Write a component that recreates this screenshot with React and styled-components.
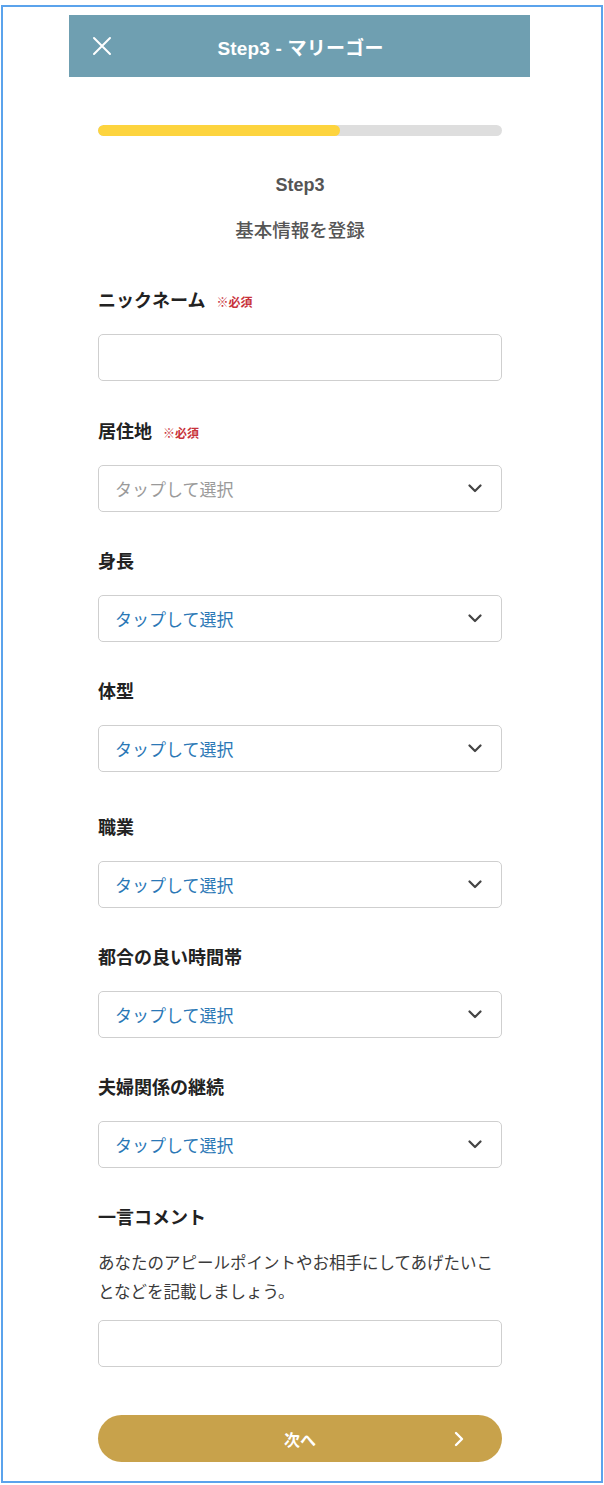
import styled, { createGlobalStyle } from "styled-components";

const GlobalStyle = createGlobalStyle`
  html, body {
    margin: 0;
    padding: 0;
    background: #fff;
  }
  body {
    font-family: "Liberation Sans", "Noto Sans CJK JP", sans-serif;
    color: #222;
  }
  * {
    box-sizing: border-box;
  }
`;

const Frame = styled.div`
  margin: 5px 1px 0 1px;
  height: 1478px;
  border: 2px solid #5ba3ec;
  padding: 8px 0 0 66px;
`;

const Column = styled.div`
  width: 461px;
`;

const Header = styled.header`
  position: relative;
  height: 62px;
  background-color: #6f9fb1;
  display: flex;
  align-items: center;
  justify-content: center;
  color: #fff;

  h1 {
    margin: 0 0 0 2px;
    font-size: 19px;
    font-weight: 600;
    letter-spacing: 0.2px;
  }
`;

const CloseButton = styled.button`
  position: absolute;
  left: 20px;
  top: 50%;
  transform: translateY(-50%);
  width: 26px;
  height: 26px;
  padding: 0;
  border: none;
  background: none;
  display: flex;
  align-items: center;
  justify-content: center;
  cursor: pointer;
`;

const Body = styled.div`
  padding: 48px 28px 0 29px;
`;

const Progress = styled.div`
  height: 11px;
  border-radius: 6px;
  background-color: #dedede;
  overflow: hidden;
`;

const ProgressFill = styled.div`
  height: 100%;
  border-radius: 6px;
  background-color: #fdd43e;
`;

const StepTitle = styled.div`
  margin-top: 37px;
  text-align: center;
  line-height: 24px;
  font-size: 18px;
  font-weight: 700;
  color: #555;
`;

const StepSub = styled.div`
  margin-top: 20px;
  text-align: center;
  line-height: 28px;
  font-size: 18.5px;
  font-weight: 500;
  color: #555;
`;

const Form = styled.div`
  margin-top: 43px;
`;

const Field = styled.div`
  margin-bottom: ${(p) => 37 + (p.$extra || 0)}px;
`;

const Label = styled.div`
  display: flex;
  align-items: baseline;
  gap: 11px;
  height: 26px;
  line-height: 26px;
  font-size: 18px;
  font-weight: 700;
  color: #222;
  margin-bottom: ${(p) => (p.$tight ? 18 : 20)}px;
`;

const Required = styled.span`
  font-size: 12px;
  font-weight: 700;
  color: #c8323a;
`;

const TextBox = styled.div`
  height: 47px;
  border: 1px solid #cfcfcf;
  border-radius: 5px;
  background: #fff;
  margin-top: ${(p) => p.$top || 0}px;
`;

const Select = styled.div`
  height: 47px;
  border: 1px solid #cfcfcf;
  border-radius: 5px;
  background: #fff;
  padding: 0 19px 0 16px;
  display: flex;
  align-items: center;
  justify-content: space-between;
  font-size: 17px;
  color: ${(p) => (p.$muted ? "#9a9a9a" : "#2b78b6")};
`;

const Help = styled.p`
  margin: 0;
  font-size: 16.5px;
  line-height: 29px;
  color: #3a3a3a;
`;

const NextButton = styled.button`
  position: relative;
  margin-top: 48px;
  width: 100%;
  height: 47px;
  border: none;
  border-radius: 24px;
  background-color: #c8a24b;
  color: #fff;
  font-family: inherit;
  font-size: 16px;
  font-weight: 600;
  display: flex;
  align-items: center;
  justify-content: center;
  cursor: pointer;

  svg {
    position: absolute;
    right: 38px;
    top: 50%;
    transform: translateY(-50%);
  }
`;

const Chevron = () => (
  <svg width="14" height="9" viewBox="0 0 14 9" fill="none">
    <path d="M1.5 1.5L7 7l5.5-5.5" stroke="#444" strokeWidth="2.2" strokeLinecap="round" strokeLinejoin="round" />
  </svg>
);

const selects = [
  { label: "居住地", required: true, muted: true },
  { label: "身長" },
  { label: "体型", extra: 6 },
  { label: "職業" },
  { label: "都合の良い時間帯" },
  { label: "夫婦関係の継続" },
];

export default function App() {
  return (
    <>
      <GlobalStyle />
      <Frame>
        <Column>
          <Header>
            <CloseButton aria-label="閉じる">
              <svg width="20" height="20" viewBox="0 0 20 20">
                <path d="M2 2L18 18M18 2L2 18" stroke="#fff" strokeWidth="2" strokeLinecap="round" />
              </svg>
            </CloseButton>
            <h1>Step3 - マリーゴー</h1>
          </Header>

          <Body>
            <Progress>
              <ProgressFill style={{ width: "60%" }} />
            </Progress>
            <StepTitle>Step3</StepTitle>
            <StepSub>基本情報を登録</StepSub>

            <Form>
              <Field $extra={1}>
                <Label>
                  ニックネーム<Required>※必須</Required>
                </Label>
                <TextBox />
              </Field>

              {selects.map((s) => (
                <Field key={s.label} $extra={s.extra}>
                  <Label>
                    {s.label}
                    {s.required && <Required>※必須</Required>}
                  </Label>
                  <Select $muted={s.muted}>
                    <span>タップして選択</span>
                    <Chevron />
                  </Select>
                </Field>
              ))}

              <div>
                <Label $tight>一言コメント</Label>
                <Help>
                  あなたのアピールポイントやお相手にしてあげたいことなどを記載しましょう。
                </Help>
                <TextBox $top={13} />
              </div>

              <NextButton>
                次へ
                <svg width="10" height="16" viewBox="0 0 10 16" fill="none">
                  <path d="M2 2l6 6-6 6" stroke="#fff" strokeWidth="2.4" strokeLinecap="round" strokeLinejoin="round" />
                </svg>
              </NextButton>
            </Form>
          </Body>
        </Column>
      </Frame>
    </>
  );
}
